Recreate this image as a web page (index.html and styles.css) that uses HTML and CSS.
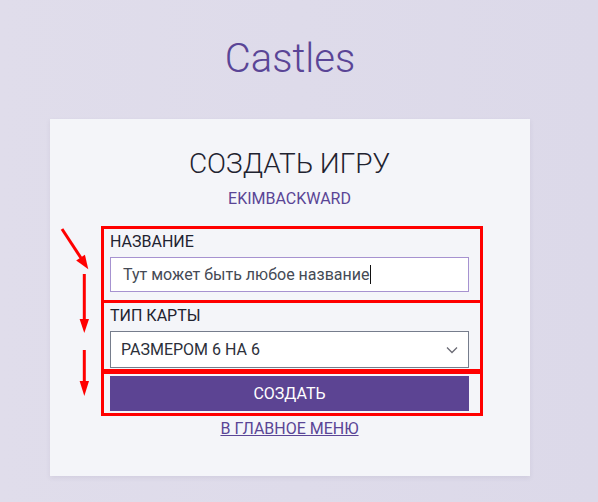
FILE: index.html
```html
<!DOCTYPE html>
<html lang="ru">
<head>
<meta charset="utf-8">
<title>Castles</title>
<link rel="stylesheet" href="styles.css">
</head>
<body>
<div class="page">
  <h1 class="logo">Castles</h1>
  <div class="card">
    <h2 class="card-title">СОЗДАТЬ ИГРУ</h2>
    <div class="user">EKIMBACKWARD</div>
    <div class="form">
      <div class="field">
        <div class="label">НАЗВАНИЕ</div>
        <div class="input">Тут может быть любое название<span class="caret"></span></div>
      </div>
      <div class="field">
        <div class="label">ТИП КАРТЫ</div>
        <div class="select">
          <span>РАЗМЕРОМ 6 НА 6</span>
          <svg class="chevron" width="12" height="8" viewBox="0 0 12 8"><path d="M1 1.5 L6 6.5 L11 1.5" fill="none" stroke="#6b6b75" stroke-width="1.3"/></svg>
        </div>
      </div>
      <div class="button">СОЗДАТЬ</div>
      <a class="link" href="#">В ГЛАВНОЕ МЕНЮ</a>
    </div>
  </div>
</div>
<svg class="annotations" width="598" height="502" viewBox="0 0 598 502">
  <g fill="none" stroke="#ff0000" stroke-width="3">
    <rect x="102.5" y="227.5" width="379" height="74"/>
    <rect x="102.5" y="301.5" width="379" height="69"/>
    <rect x="102.5" y="372.5" width="379" height="42"/>
    <line x1="62" y1="229" x2="81" y2="258"/>
    <line x1="84.3" y1="274" x2="84.3" y2="320"/>
    <line x1="84.3" y1="350" x2="84.3" y2="382"/>
  </g>
  <g fill="#ff0000">
    <polygon points="88.3,269.3 76.2,260.6 84.9,254.7"/>
    <polygon points="84.3,333 79.6,319 89,319"/>
    <polygon points="84.3,396 79.6,381 89,381"/>
  </g>
</svg>
</body>
</html>
```
FILE: styles.css
```css
html, body {
  margin: 0;
  padding: 0;
}
body {
  background: linear-gradient(90deg, #e0ddeb 0%, #dcd9e9 100%);
  font-family: Roboto, "Noto Sans", sans-serif;
  width: 598px;
  height: 502px;
  overflow: hidden;
  position: relative;
}
.page {
  width: 580px;
  padding-top: 35px;
  display: flex;
  flex-direction: column;
  align-items: center;
}
.logo {
  margin: 0;
  font-size: 40px;
  line-height: 48px;
  font-weight: 300;
  color: #5a4596;
}
.card {
  margin-top: 36px;
  width: 480px;
  box-sizing: border-box;
  padding: 28px 61px 38px 60px;
  background: #f4f5f9;
  box-shadow: 0 2px 5px rgba(60, 50, 90, 0.08);
  display: flex;
  flex-direction: column;
  align-items: center;
}
.card-title {
  margin: 0;
  font-size: 28px;
  line-height: 34px;
  font-weight: 300;
  color: #1f2330;
}
.user {
  margin-top: 8px;
  font-size: 16px;
  line-height: 19px;
  color: #5a4596;
}
.form {
  margin-top: 24px;
  width: 359px;
  display: flex;
  flex-direction: column;
}
.field {
  display: flex;
  flex-direction: column;
  margin-bottom: 14px;
}
.field + .field {
  margin-bottom: 8px;
}
.label {
  font-size: 16px;
  line-height: 19px;
  color: #1f2330;
  margin-bottom: 6px;
}
.input {
  height: 35px;
  box-sizing: border-box;
  border: 1px solid #a692d0;
  background: #ffffff;
  padding-left: 12px;
  display: flex;
  align-items: center;
  font-size: 16px;
  color: #454a55;
}
.caret {
  display: inline-block;
  width: 1px;
  height: 19px;
  background: #111;
  margin-left: 1px;
}
.select {
  height: 37px;
  box-sizing: border-box;
  border: 1px solid #767d8c;
  background: #ffffff;
  padding: 0 10px 0 10px;
  display: flex;
  align-items: center;
  justify-content: space-between;
  font-size: 16px;
  color: #2c303a;
}
.chevron {
  display: block;
}
.button {
  height: 35px;
  background: #5c4493;
  color: #ffffff;
  font-size: 16px;
  display: flex;
  align-items: center;
  justify-content: center;
}
.link {
  margin-top: 8px;
  align-self: center;
  font-size: 16px;
  line-height: 19px;
  color: #5a4596;
  text-decoration: underline;
}
.annotations {
  position: absolute;
  left: 0;
  top: 0;
  pointer-events: none;
}
```
